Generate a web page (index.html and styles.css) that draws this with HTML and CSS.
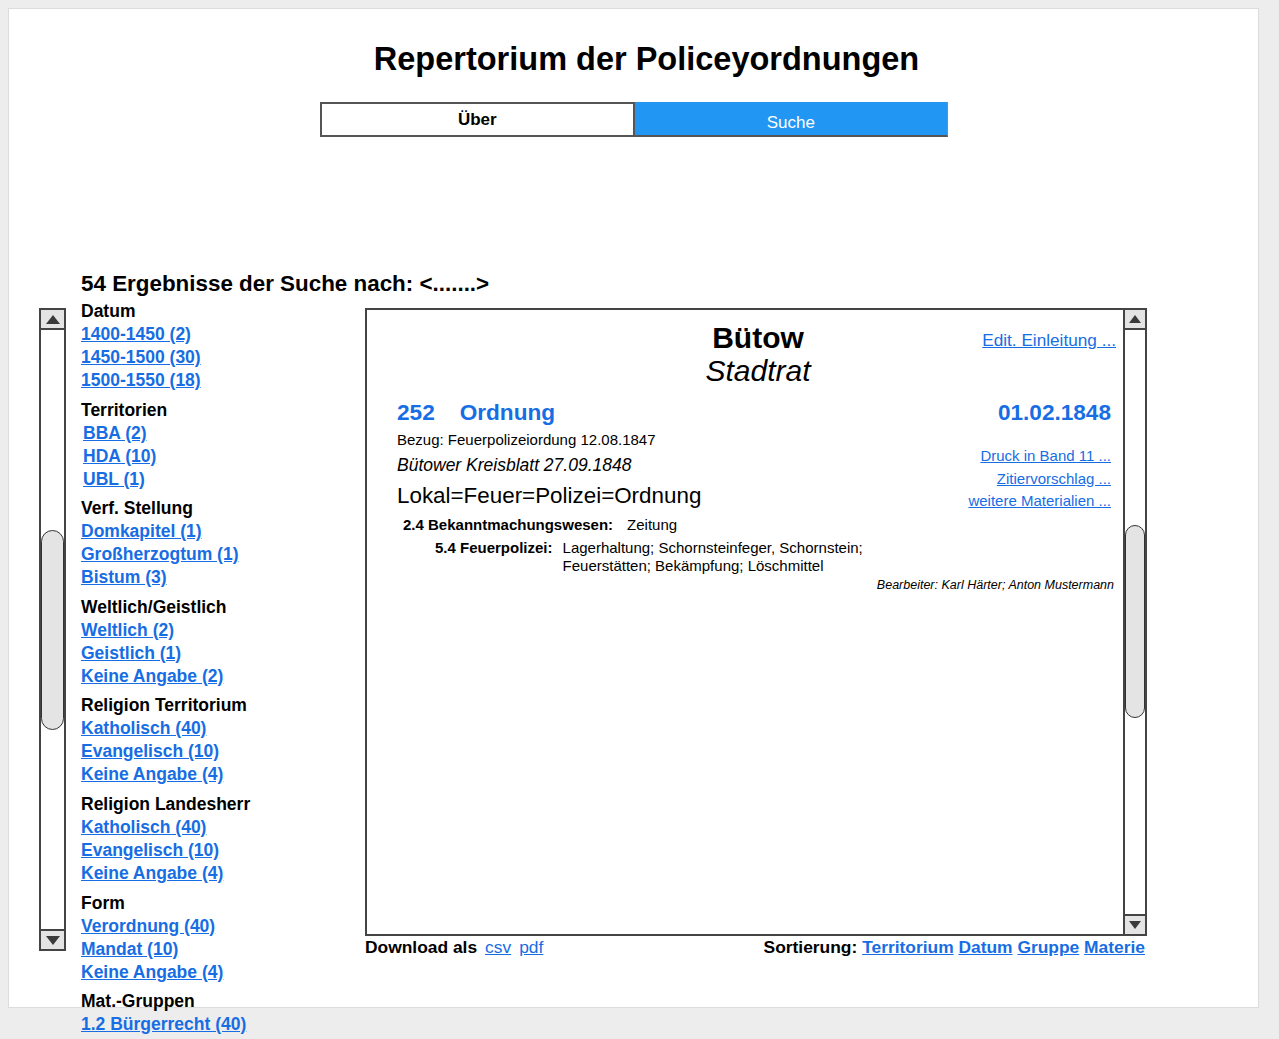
FILE: index.html
```html
<!DOCTYPE html>
<html lang="de">
<head>
<meta charset="utf-8">
<title>Repertorium der Policeyordnungen</title>
<link rel="stylesheet" href="styles.css">
</head>
<body>
<div class="panel">
  <h1 class="title">Repertorium der Policeyordnungen</h1>
  <nav class="tabs">
    <a class="tab tab-off">Über</a>
    <a class="tab tab-on">Suche</a>
  </nav>
  <h2 class="results-title">54 Ergebnisse der Suche nach: &lt;.......&gt;</h2>
  <div class="layout">
    <div class="scrollbar scrollbar-left">
      <div class="sb-btn sb-up"><svg width="14" height="9" viewBox="0 0 14 9"><polygon points="0,9 7,0 14,9" fill="#3a3a3a"/></svg></div>
      <div class="sb-track"><div class="sb-thumb thumb-left"></div></div>
      <div class="sb-btn sb-down"><svg width="14" height="9" viewBox="0 0 14 9"><polygon points="0,0 7,9 14,0" fill="#3a3a3a"/></svg></div>
    </div>
    <aside class="facets">
      <section class="facet">
        <h3>Datum</h3>
        <a href="#">1400-1450 (2)</a>
        <a href="#">1450-1500 (30)</a>
        <a href="#">1500-1550 (18)</a>
      </section>
      <section class="facet facet-indent">
        <h3>Territorien</h3>
        <a href="#">BBA (2)</a>
        <a href="#">HDA (10)</a>
        <a href="#">UBL (1)</a>
      </section>
      <section class="facet">
        <h3>Verf. Stellung</h3>
        <a href="#">Domkapitel (1)</a>
        <a href="#">Großherzogtum (1)</a>
        <a href="#">Bistum (3)</a>
      </section>
      <section class="facet">
        <h3>Weltlich/Geistlich</h3>
        <a href="#">Weltlich (2)</a>
        <a href="#">Geistlich (1)</a>
        <a href="#">Keine Angabe (2)</a>
      </section>
      <section class="facet">
        <h3>Religion Territorium</h3>
        <a href="#">Katholisch (40)</a>
        <a href="#">Evangelisch (10)</a>
        <a href="#">Keine Angabe (4)</a>
      </section>
      <section class="facet">
        <h3>Religion Landesherr</h3>
        <a href="#">Katholisch (40)</a>
        <a href="#">Evangelisch (10)</a>
        <a href="#">Keine Angabe (4)</a>
      </section>
      <section class="facet">
        <h3>Form</h3>
        <a href="#">Verordnung (40)</a>
        <a href="#">Mandat (10)</a>
        <a href="#">Keine Angabe (4)</a>
      </section>
      <section class="facet">
        <h3>Mat.-Gruppen</h3>
        <a href="#">1.2 Bürgerrecht (40)</a>
      </section>
    </aside>
    <main class="main-col">
      <div class="card">
        <div class="card-body">
          <div class="card-head">
            <div class="place">
              <div class="place-name">Bütow</div>
              <div class="place-auth">Stadtrat</div>
            </div>
            <a href="#" class="edit-link">Edit. Einleitung ...</a>
          </div>
          <div class="entry-row">
            <div class="entry-id"><span class="entry-no">252</span><span>Ordnung</span></div>
            <div>01.02.1848</div>
          </div>
          <div class="details">
            <div class="details-main">
              <div class="ref">Bezug: Feuerpolizeiordung 12.08.1847</div>
              <div class="source">Bütower Kreisblatt 27.09.1848</div>
              <div class="lokal">Lokal=Feuer=Polizei=Ordnung</div>
              <div class="cat cat-1"><span class="cat-label">2.4 Bekanntmachungswesen:</span><span class="cat-value">Zeitung</span></div>
              <div class="cat cat-2"><span class="cat-label">5.4 Feuerpolizei:</span><span class="cat-value">Lagerhaltung; Schornsteinfeger, Schornstein; Feuerstätten; Bekämpfung; Löschmittel</span></div>
            </div>
            <div class="more-links">
              <a href="#">Druck in Band 11 ...</a>
              <a href="#">Zitiervorschlag ...</a>
              <a href="#">weitere Materialien ...</a>
            </div>
          </div>
          <div class="editors">Bearbeiter: Karl Härter; Anton Mustermann</div>
        </div>
        <div class="scrollbar scrollbar-right">
          <div class="sb-btn sb-up"><svg width="12" height="8" viewBox="0 0 12 8"><polygon points="0,8 6,0 12,8" fill="#3a3a3a"/></svg></div>
          <div class="sb-track"><div class="sb-thumb thumb-right"></div></div>
          <div class="sb-btn sb-down"><svg width="12" height="8" viewBox="0 0 12 8"><polygon points="0,0 6,8 12,0" fill="#3a3a3a"/></svg></div>
        </div>
      </div>
      <div class="footer">
        <div class="download"><b>Download als</b><a href="#" class="dl-link">csv</a><a href="#" class="dl-link">pdf</a></div>
        <div class="sorting"><b>Sortierung:</b> <a href="#">Territorium</a> <a href="#">Datum</a> <a href="#">Gruppe</a> <a href="#">Materie</a></div>
      </div>
    </main>
  </div>
</div>
</body>
</html>
```
FILE: styles.css
```css
* { box-sizing: border-box; }
body {
  margin: 0;
  padding: 8px 8px 30px;
  background: #ededed;
  font-family: "Liberation Sans", Arial, sans-serif;
  color: #000;
}
a { color: #176de3; text-decoration: underline; }

.panel {
  width: 1251px;
  height: 1000px;
  background: #fff;
  border: 1px solid #dcdcdc;
  padding-top: 32px;
}

.title {
  margin: 0;
  padding-left: 26px;
  text-align: center;
  font-size: 32.5px;
  line-height: 36px;
  font-weight: bold;
}

.tabs {
  display: flex;
  width: 628px;
  height: 35px;
  margin: 25px auto 0;
}
.tab {
  flex: 1;
  display: flex;
  align-items: center;
  justify-content: center;
  font-size: 17px;
  text-decoration: none;
}
.tab-off {
  border: 2px solid #555;
  background: #fff;
  color: #000;
  font-weight: bold;
}
.tab-on {
  background: #2196f3;
  color: #fff;
  border-bottom: 2px solid #555;
  border-right: 1px solid #8a8a8a;
  padding-top: 8px;
}

.results-title {
  margin: 134px 0 0;
  padding-left: 72px;
  font-size: 22.4px;
  line-height: 26px;
  font-weight: bold;
}

.layout {
  display: flex;
  align-items: flex-start;
  margin-top: 3px;
  padding-left: 30px;
}

/* scrollbars */
.scrollbar {
  display: flex;
  flex-direction: column;
  background: #fff;
}
.scrollbar-left {
  width: 27px;
  height: 643px;
  margin-top: 8px;
  margin-right: 15px;
  border: 2px solid #444;
}
.scrollbar-right {
  width: 22px;
  border-left: 2px solid #444;
}
.sb-btn {
  height: 20px;
  background: #e4e4e4;
  display: flex;
  align-items: center;
  justify-content: center;
  flex: none;
}
.sb-up { border-bottom: 2px solid #444; }
.sb-down { border-top: 2px solid #444; }
.sb-track {
  flex: 1;
  display: flex;
  flex-direction: column;
}
.sb-thumb {
  background: #e4e4e4;
  border: 1.5px solid #333;
  border-radius: 13px;
}
.thumb-left { margin-top: 200px; height: 200px; }
.thumb-right { margin-top: 195px; height: 193px; border-radius: 11px; }

/* facets */
.facets {
  width: 284px;
  flex: none;
  font-size: 17.5px;
  line-height: 23px;
  font-weight: bold;
}
.facet { margin-bottom: 6.6px; }
.facet h3 {
  margin: 0;
  font-size: 17.5px;
  font-weight: bold;
}
.facet a { display: table; }
.facet-indent a { margin-left: 2px; }

/* card */
.main-col { width: 782px; flex: none; margin-top: 8px; }
.card {
  display: flex;
  height: 628px;
  border: 2px solid #444;
}
.card-body {
  flex: 1;
  padding: 11px 12px 0 30px;
}
.card-head {
  display: grid;
  grid-template-columns: 1fr auto 1fr;
}
.place {
  grid-column: 2;
  text-align: center;
  margin-left: 8px;
}
.place-name { font-size: 30px; line-height: 33px; font-weight: bold; }
.place-auth { font-size: 30px; line-height: 33px; font-style: italic; }
.edit-link {
  grid-column: 3;
  justify-self: end;
  align-self: start;
  margin-top: 9px;
  margin-right: -5px;
  font-size: 17.2px;
  line-height: 20px;
}

.entry-row {
  display: flex;
  justify-content: space-between;
  margin-top: 12px;
  font-size: 22.6px;
  line-height: 27px;
  font-weight: bold;
  color: #176de3;
}
.entry-no { margin-right: 25px; }

.details {
  display: grid;
  grid-template-columns: 1fr auto;
  margin-top: 5px;
}
.ref { font-size: 15px; line-height: 18px; }
.source { margin-top: 5px; font-size: 17.5px; line-height: 22px; font-style: italic; }
.lokal { margin-top: 7px; font-size: 22.4px; line-height: 26px; }
.cat { display: flex; font-size: 15px; line-height: 18px; }
.cat-label { font-weight: bold; flex: none; }
.cat-1 { margin-top: 7px; padding-left: 6px; }
.cat-1 .cat-value { margin-left: 14px; }
.cat-2 { margin-top: 5px; padding-left: 38px; }
.cat-2 .cat-value { margin-left: 10px; max-width: 310px; }
.more-links {
  padding-top: 14px;
  text-align: right;
  font-size: 15px;
  line-height: 22.5px;
}
.more-links a { display: block; }
.editors {
  margin-top: 2px;
  margin-right: -3px;
  text-align: right;
  font-size: 12.5px;
  line-height: 16px;
  font-style: italic;
}

.footer {
  display: flex;
  justify-content: space-between;
  margin-top: 1px;
  padding-right: 2px;
  font-size: 17.4px;
  line-height: 20px;
}
.dl-link { margin-left: 8px; }
.sorting a { font-weight: bold; }
```
